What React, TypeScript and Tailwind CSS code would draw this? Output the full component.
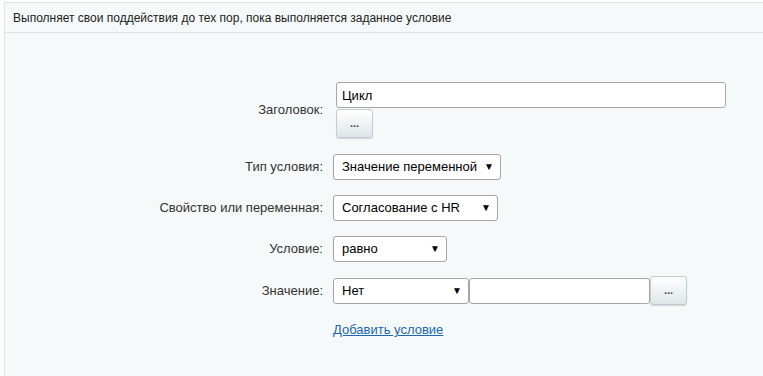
import React from 'react'

const Arrow = () => <span className="text-[10px] leading-none text-black">▼</span>

function Select({ value, width }: { value: string; width: string }) {
    return (
        <div className={`${width} h-[26px] flex items-center justify-between pl-[8px] pr-[6px] bg-white border border-[#a6a6a6] rounded-[3px] text-[13px] text-black`}>
            <span>{value}</span>
            <Arrow />
        </div>
    )
}

function DotsButton({ className = '' }: { className?: string }) {
    return (
        <button className={`w-[37px] h-[29px] rounded-[3px] border border-[#c3cbce] bg-gradient-to-b from-white to-[#dfe6e8] shadow-[0_1px_1px_rgba(0,0,0,0.15)] text-[11px] font-bold text-[#444] leading-none ${className}`}>
            ...
        </button>
    )
}

function Row({ label, children, className = '' }: { label: string; children: React.ReactNode; className?: string }) {
    return (
        <div className={`flex items-center ${className}`}>
            <div className="w-[318px] text-right text-[13px] text-[#333]">{label}</div>
            <div className="pl-[10px] flex items-center">{children}</div>
        </div>
    )
}

export default function App() {
    return (
        <div className="w-[763px] h-[376px] bg-white pt-[2px] pl-[4px] font-['Liberation_Sans',Arial,sans-serif]">
            <div className="h-[374px] bg-[#f5f9f9] border-l border-t border-[#dce6e7]">
                <div className="h-[30px] border-b border-[#dce6e7] flex items-center pl-[8px] text-[12px] text-[#222]">
                    Выполняет свои поддействия до тех пор, пока выполняется заданное условие
                </div>
                <div className="pt-[49px]">
                    <div className="flex items-center">
                        <div className="w-[318px] text-right text-[13px] text-[#333]">Заголовок:</div>
                        <div className="pl-[13px] flex flex-col">
                            <input
                                className="w-[390px] h-[26px] px-[5px] bg-white border border-[#a6a6a6] rounded-[3px] text-[13px] text-black outline-none"
                                defaultValue="Цикл"
                            />
                            <DotsButton className="mt-px" />
                        </div>
                    </div>
                    <Row label="Тип условия:" className="mt-[16px]">
                        <Select value="Значение переменной" width="w-[168px]" />
                    </Row>
                    <Row label="Свойство или переменная:" className="mt-[15px]">
                        <Select value="Согласование с HR" width="w-[165px]" />
                    </Row>
                    <Row label="Условие:" className="mt-[15px]">
                        <Select value="равно" width="w-[114px]" />
                    </Row>
                    <Row label="Значение:" className="mt-[14px]">
                        <Select value="Нет" width="w-[136px]" />
                        <div className="w-[181px] h-[26px] bg-white border border-[#a6a6a6] rounded-[3px]" />
                        <DotsButton />
                    </Row>
                    <div className="pl-[328px] mt-[12px]">
                        <a href="#" className="text-[13px] text-[#2067b0] underline">Добавить условие</a>
                    </div>
                </div>
            </div>
        </div>
    )
}
